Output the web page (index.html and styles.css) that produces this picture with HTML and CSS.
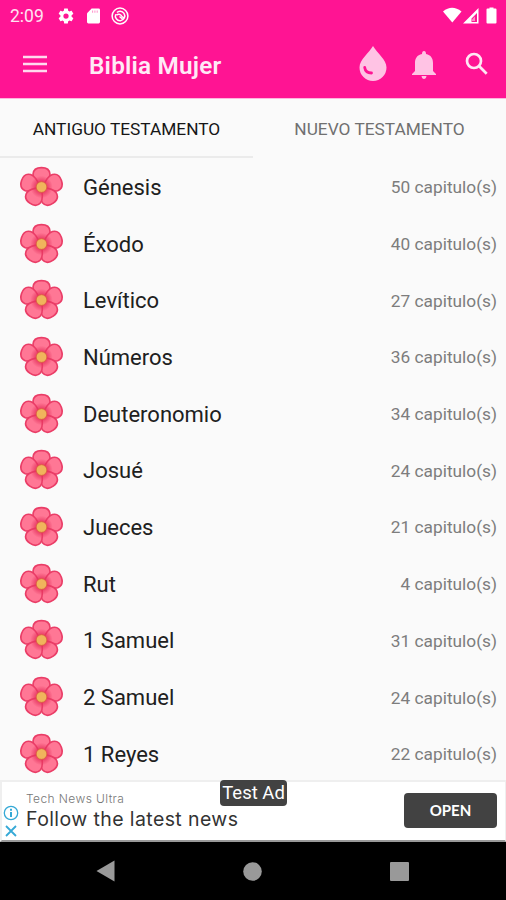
FILE: index.html
```html
<!-- index.html -->
<!DOCTYPE html>
<html lang="es">
<head>
    <meta charset="UTF-8">
    <meta name="viewport" content="width=device-width, initial-scale=1.0">
    <title>Biblia Mujer</title>
    <link rel="stylesheet" href="styles.css">
</head>
<body>
    <svg width="0" height="0" class="defs">
        <radialGradient id="core" gradientUnits="userSpaceOnUse" cx="22" cy="20.500" r="11">
            <stop offset="0.350" stop-color="#e5315c"/>
            <stop offset="1" stop-color="#e5315c" stop-opacity="0"/>
        </radialGradient>
        <symbol id="flower" viewBox="0 0 44 40">
            <g fill="#ff7795" stroke="#ea3d67" stroke-width="1.600">
                <path id="petal" d="M22 20.500 C18 17 13.500 13 13.700 8 C14 3.500 17.500 1.500 22 1.500 C26.500 1.500 30 3.500 30.300 8 C30.500 13 26 17 22 20.500Z"/>
                <use href="#petal" transform="rotate(72 22 20.500) translate(0 -1.500)"/>
                <use href="#petal" transform="rotate(288 22 20.500) translate(0 -1.500)"/>
                <use href="#petal" transform="rotate(144 22 20.500) translate(0 -0.500)"/>
                <use href="#petal" transform="rotate(216 22 20.500) translate(0 -0.500)"/>
            </g>
            <circle cx="22" cy="20.500" r="11" fill="url(#core)"/>
            <circle cx="22" cy="20.500" r="5.200" fill="#f0b45c" stroke="#d9643f" stroke-width="0.800"/>
        </symbol>
    </svg>

    <header class="header">
        <div class="status">
            <span class="time">2:09</span>
            <svg class="gear" width="18" height="18" viewBox="0 0 24 24"><path fill="#fff" fill-rule="evenodd" d="M19.430 12.980c.04-.32.07-.64.07-.98s-.03-.66-.07-.98l2.110-1.650c.19-.15.24-.42.12-.64l-2-3.460c-.12-.22-.39-.3-.61-.22l-2.490 1c-.52-.4-1.080-.73-1.690-.98l-.38-2.650A.49.49 0 0 0 14 2h-4c-.25 0-.46.18-.49.42l-.38 2.650c-.61.25-1.170.59-1.690.98l-2.490-1c-.23-.09-.49 0-.61.22l-2 3.460c-.13.22-.07.49.12.64l2.110 1.650c-.04.32-.07.65-.07.98s.03.66.07.98l-2.110 1.650c-.19.15-.24.42-.12.64l2 3.460c.12.22.39.3.61.22l2.490-1c.52.4 1.080.73 1.690.98l.38 2.650c.03.24.24.42.49.42h4c.25 0 .46-.18.49-.42l.38-2.650c.61-.25 1.170-.59 1.690-.98l2.490 1c.23.09.49 0 .61-.22l2-3.460c.12-.22.07-.49-.12-.64l-2.110-1.650zM12 15.500a3.500 3.500 0 1 1 0-7 3.500 3.500 0 0 1 0 7z"/></svg>
            <svg class="card-icon" width="13" height="16" viewBox="0 0 14 16"><path fill="#fff" d="M5 0h7.500q1.500 0 1.500 1.500v13q0 1.500-1.500 1.500h-11Q0 16 0 14.500V5z"/><path d="M6 2v2.500M8.500 2v2.500M11 2v2.500" stroke="#ff9bd0" stroke-width="1.200"/></svg>
            <svg class="sync" width="18" height="18" viewBox="0 0 18 18" fill="none" stroke="#fff"><circle cx="9" cy="9" r="7.900" stroke-width="1.500"/><path d="M4.700 7.200a4.700 4.700 0 1 0 8.300-.8C11 3.500 7.500 3.700 6 5.500M5.500 8C8 6.500 10 7.500 11 9.500l2 1.500M8.500 9.500l3 2.500" stroke-width="1.500"/></svg>
            <svg class="signals" width="55" height="18" viewBox="0 0 55 18" fill="#fff">
                <path d="M0 4.500Q9-3 18.500 4.500L9.300 15.500Z"/>
                <path fill-rule="evenodd" d="M35.500 1v15.500H20zM34 6l-5.500 5.500V15H34z"/>
                <path d="M32 9.500V14h-3v-1.500z" fill="#ff8cc8"/>
                <path d="M46.500 1.500V.5h4v1h2q1 0 1 1V15.500q0 1-1 1h-8q-1 0-1-1V2.500q0-1 1-1z"/>
            </svg>
        </div>
        <div class="toolbar">
            <svg class="menu" width="24" height="18" viewBox="0 0 24 18"><path d="M0 2h24M0 9h24M0 16h24" stroke="#ffd9ee" stroke-width="2.700"/></svg>
            <h1>Biblia Mujer</h1>
            <svg class="drop" width="28" height="35" viewBox="0 0 28 35"><path fill="#ffc3e4" d="M14 0C18 7 27.500 13.500 27.500 21.500A13.500 13.500 0 0 1 .5 21.500C.5 13.500 10 7 14 0z"/><path d="M5.700 21.500Q6.500 27 12.500 27" fill="none" stroke="#ff1493" stroke-width="2.800" stroke-linecap="round"/></svg>
            <svg class="bell" width="24" height="28" viewBox="0 0 24 28" fill="#ffc3e4"><path d="M12 0q2 0 2 3c5 1 7 4.500 7 9v8l3 3v1H0v-1l3-3v-8c0-4.500 2-8 7-9q0-3 2-3zM9.500 25h5q-.5 3-2.500 3t-2.500-3z"/></svg>
            <svg class="search" width="24" height="24" viewBox="0 0 24 24" fill="none" stroke="#ffe6f4" stroke-width="2.700"><circle cx="9" cy="9" r="7"/><path d="M14 14l7.700 7.700"/></svg>
        </div>
    </header>

    <nav class="tabs">
        <div class="tab active"><span>ANTIGUO TESTAMENTO</span></div>
        <div class="tab"><span>NUEVO TESTAMENTO</span></div>
    </nav>

    <main class="books">
        <div class="book"><svg class="flower"><use href="#flower"/></svg><span class="name">Génesis</span><span class="count">50 capitulo(s)</span></div>
        <div class="book"><svg class="flower"><use href="#flower"/></svg><span class="name">Éxodo</span><span class="count">40 capitulo(s)</span></div>
        <div class="book"><svg class="flower"><use href="#flower"/></svg><span class="name">Levítico</span><span class="count">27 capitulo(s)</span></div>
        <div class="book"><svg class="flower"><use href="#flower"/></svg><span class="name">Números</span><span class="count">36 capitulo(s)</span></div>
        <div class="book"><svg class="flower"><use href="#flower"/></svg><span class="name">Deuteronomio</span><span class="count">34 capitulo(s)</span></div>
        <div class="book"><svg class="flower"><use href="#flower"/></svg><span class="name">Josué</span><span class="count">24 capitulo(s)</span></div>
        <div class="book"><svg class="flower"><use href="#flower"/></svg><span class="name">Jueces</span><span class="count">21 capitulo(s)</span></div>
        <div class="book"><svg class="flower"><use href="#flower"/></svg><span class="name">Rut</span><span class="count">4 capitulo(s)</span></div>
        <div class="book"><svg class="flower"><use href="#flower"/></svg><span class="name">1 Samuel</span><span class="count">31 capitulo(s)</span></div>
        <div class="book"><svg class="flower"><use href="#flower"/></svg><span class="name">2 Samuel</span><span class="count">24 capitulo(s)</span></div>
        <div class="book"><svg class="flower"><use href="#flower"/></svg><span class="name">1 Reyes</span><span class="count">22 capitulo(s)</span></div>
    </main>

    <section class="ad">
        <div class="ad-icons">
            <svg width="16" height="16" viewBox="0 0 16 16" fill="none" stroke="#35a9d6"><circle cx="8" cy="8" r="6.700" stroke-width="1.300"/><path d="M8 3.700v2M8 7v5" stroke-width="2"/></svg>
            <svg width="12" height="12" viewBox="0 0 12 12" stroke="#35a9d6" stroke-width="1.800"><path d="M1 1l10 10M11 1L1 11"/></svg>
        </div>
        <div class="ad-text">
            <span class="advertiser">Tech News Ultra</span>
            <span class="headline">Follow the latest news</span>
        </div>
        <button class="open">OPEN</button>
        <span class="test-label">Test Ad</span>
    </section>

    <!-- Android navigation bar -->
    <footer class="navbar">
        <svg width="19" height="22" viewBox="0 0 19 22"><path d="M18.500 .5v21L.5 11z" fill="#999"/></svg>
        <svg width="19" height="19" viewBox="0 0 19 19"><circle cx="9.500" cy="9.500" r="9.300" fill="#999"/></svg>
        <svg width="19" height="19" viewBox="0 0 19 19"><rect width="19" height="19" rx="1" fill="#999"/></svg>
    </footer>
</body>
</html>
```

FILE: styles.css
```css
* {
    box-sizing: border-box;
}
body {
    margin: 0;
    width: 506px;
    height: 900px;
    overflow: hidden;
    display: flex;
    flex-direction: column;
    background-color: #fafafa;
    font-family: Roboto, sans-serif;
}
svg {
    display: block;
    flex: none;
}
.defs {
    position: absolute;
}
.header {
    flex: none;
    height: 99px;
    background-color: #ff1493;
    border-bottom: 1px solid #ffb5de;
    color: #fff;
}
.status {
    display: flex;
    align-items: center;
    height: 31px;
    padding-left: 10px;
}
.time {
    width: 47px;
    font-size: 17.500px;
    color: #ffe3f2;
}
.card-icon {
    margin-left: 12px;
}
.sync {
    margin-left: 11px;
}
.signals {
    margin-left: auto;
    margin-right: 8px;
}
.toolbar {
    display: flex;
    align-items: center;
    height: 68px;
    padding: 0 17px 2px 23px;
}
.toolbar h1 {
    flex: 1;
    margin: 0 0 0 42px;
    font-size: 24.300px;
    font-weight: 600;
    letter-spacing: 0.2px;
    line-height: 28px;
    color: #ffeaf6;
    padding-top: 3px;
}
.drop {
    margin-top: -2px;
}
.bell {
    margin-left: 25px;
    margin-top: 1px;
}
.search {
    margin-left: 29px;
}
.tabs {
    flex: none;
    display: flex;
    height: 59px;
}
.tab {
    flex: 1;
    display: flex;
    align-items: center;
    justify-content: center;
    padding-top: 2px;
    font-size: 17.300px;
    color: #707070;
    border-bottom: 2px solid transparent;
}
.tab.active {
    color: #161616;
    border-bottom-color: #ebebeb;
}
.books {
    flex: none;
    height: 622px;
    padding-top: 1px;
    overflow: hidden;
}
.book {
    display: flex;
    align-items: center;
    height: 56.700px;
    padding: 0 9px 0 19px;
}
.flower {
    width: 45px;
    height: 41px;
    margin-top: -2px;
}
.name {
    flex: 1;
    margin-left: 19px;
    font-size: 22px;
    color: #202020;
}
.count {
    font-size: 17.300px;
    color: #7d7d7d;
}
.ad {
    position: relative;
    flex: none;
    display: flex;
    height: 62px;
    background-color: #fff;
    border: 2px solid #efefef;
    border-bottom-color: #999;
    border-right-width: 1px;
    font-family: Inter, sans-serif;
}
.ad-icons {
    display: flex;
    flex-direction: column;
    align-items: center;
    gap: 4px;
    width: 18px;
    padding-top: 23px;
}
.ad-text {
    flex: 1;
    display: flex;
    flex-direction: column;
    padding: 9px 0 0 6px;
}
.advertiser {
    font-size: 12px;
    font-weight: 300;
    letter-spacing: 0.4px;
    line-height: 15px;
    color: #777;
}
.headline {
    font-size: 19.500px;
    letter-spacing: 0.4px;
    line-height: 27px;
    color: #333;
}
.open {
    width: 93px;
    height: 35px;
    margin: 11px 8px 0 0;
    padding: 0 0 1px;
    border: none;
    border-radius: 4px;
    background-color: #424242;
    color: #fff;
    font-family: Lato, sans-serif;
    font-size: 15px;
    font-weight: bold;
}
.test-label {
    position: absolute;
    left: 218px;
    top: -2px;
    width: 67px;
    height: 26px;
    border-radius: 4px;
    background-color: #424242;
    color: #fff;
    font-family: Roboto, sans-serif;
    font-size: 18.500px;
    line-height: 27px;
    text-align: center;
    white-space: nowrap;
}
.navbar {
    flex: 1;
    display: flex;
    align-items: center;
    justify-content: space-between;
    padding: 0 97px 0 96px;
    background-color: #000;
}
```
